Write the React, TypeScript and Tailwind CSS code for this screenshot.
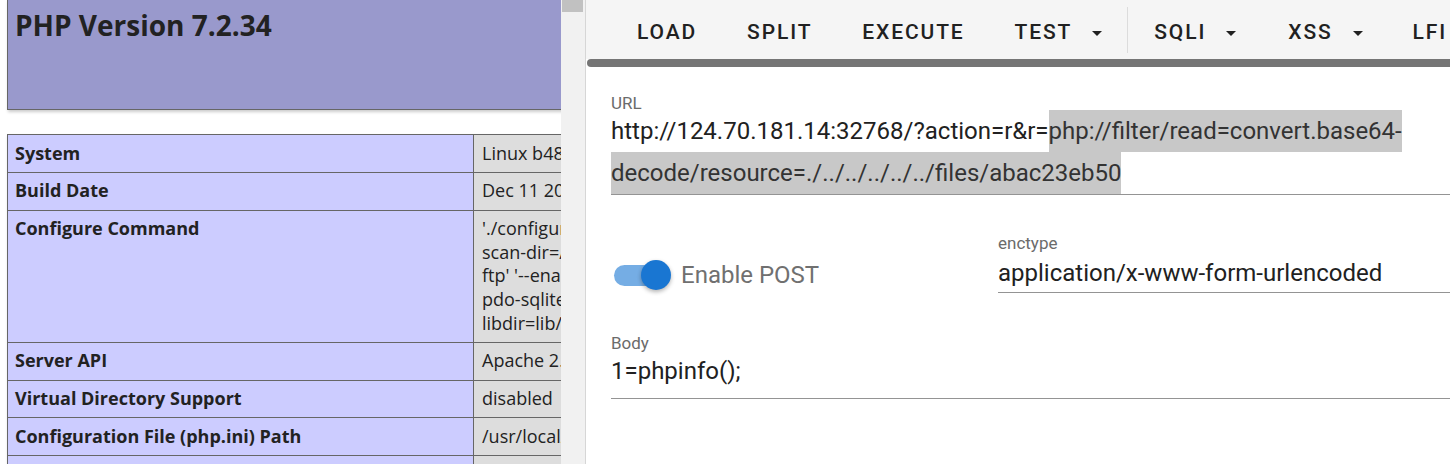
import { ReactNode } from 'react'

const rows: { label: string; value: string[] }[] = [
  { label: 'System', value: ['Linux b48d1f1a9c7e 4.15.0-112-generic #113-Ubuntu SMP Thu Jul 9 23:41:39 UTC 2020 x86_64'] },
  { label: 'Build Date', value: ['Dec 11 2020 10:44:02'] },
  {
    label: 'Configure Command',
    value: [
      "'./configure' '--build=x86_64-linux-gnu' '--with-config-file-path=/usr/local/etc/php' '--with-config-file-",
      "scan-dir=/usr/local/etc/php/conf.d' '--enable-option-checking=fatal' '--with-mhash' '--enable-",
      "ftp' '--enable-mbstring' '--enable-mysqlnd' '--with-password-argon2' '--with-sodium=shared' '--with-",
      "pdo-sqlite=/usr' '--with-sqlite3=/usr' '--with-curl' '--with-libedit' '--with-openssl' '--with-zlib' '--with-",
      "libdir=lib/x86_64-linux-gnu' '--with-apxs2' '--disable-cgi' 'build_alias=x86_64-linux-gnu'",
    ],
  },
  { label: 'Server API', value: ['Apache 2.0 Handler'] },
  { label: 'Virtual Directory Support', value: ['disabled'] },
  { label: 'Configuration File (php.ini) Path', value: ['/usr/local/etc/php'] },
  { label: 'Loaded Configuration File', value: ['(none)'] },
]

function PhpInfo() {
  return (
    <div className="w-[561px] shrink-0 overflow-hidden bg-white font-['Open_Sans',sans-serif] text-[#222]">
      <div className="w-[1100px] pl-[7px]">
        {/* header box, top edge is scrolled away */}
        <div className="h-[110px] border-x border-b border-[#666] bg-[#9999cc] pt-[4px] pl-[7px] shadow-[1px_2px_3px_#ccc]">
          <h1 className="text-[28px] font-bold leading-normal">PHP Version 7.2.34</h1>
        </div>

        <table className="mt-[24px] w-[1000px] table-fixed border-collapse text-[18px] leading-[23.6px] shadow-[1px_2px_3px_#ccc]">
          <colgroup>
            <col className="w-[466px]" />
            <col />
          </colgroup>
          <tbody>
            {rows.map((row) => (
              <tr key={row.label}>
                <td className="border border-[#666] bg-[#ccccff] py-[6.6px] pl-[7px] align-top font-bold whitespace-nowrap">
                  {row.label}
                </td>
                <td className="overflow-hidden border border-[#666] bg-[#dddddd] py-[6.6px] pl-[8px] align-top">
                  {row.value.map((line) => (
                    <div key={line} className="whitespace-nowrap">{line}</div>
                  ))}
                </td>
              </tr>
            ))}
          </tbody>
        </table>
      </div>
    </div>
  )
}

function MenuArrow() {
  return (
    <svg viewBox="0 0 24 24" className="ml-[13px] h-[24px] w-[24px] fill-current">
      <path d="M7 10l5 5 5-5z" />
    </svg>
  )
}

function ToolButton({ children, menu, pr }: { children: ReactNode; menu?: boolean; pr?: string }) {
  return (
    <div className={`flex h-full shrink-0 items-center pl-[26px] ${pr ?? (menu ? 'pr-[19px]' : 'pr-[24px]')}`}>
      <span>{children}</span>
      {menu && <MenuArrow />}
    </div>
  )
}

function HackBar() {
  return (
    <div className="flex min-w-0 flex-1 flex-col overflow-hidden bg-white font-['Roboto',sans-serif]">
      {/* toolbar */}
      <div className="flex h-[59px] shrink-0 items-center bg-[#f5f5f5] text-[21px] font-medium uppercase tracking-[0.0892857em] text-[#212121]">
        <div className="flex h-full items-center pl-[25px] pt-[6px]">
          <ToolButton>Load</ToolButton>
          <ToolButton>Split</ToolButton>
          <ToolButton>Execute</ToolButton>
          <ToolButton menu pr="pr-[18px]">Test</ToolButton>
          <div className="-mt-[6px] h-[46px] w-px shrink-0 bg-[#dcdcdc]" />
          <ToolButton menu>SQLI</ToolButton>
          <ToolButton menu pr="pr-[17px]">XSS</ToolButton>
          <ToolButton menu>LFI</ToolButton>
          <ToolButton menu>SSTI</ToolButton>
        </div>
      </div>
      <div className="ml-[1px] h-[8px] shrink-0 rounded-l-[4px] bg-[#757575]" />

      <div className="pl-[25px]">
        {/* URL */}
        <div className="h-[43px] pt-[28px] text-[17px] leading-[17px] text-[#6b6b6b]">URL</div>
        <div className="border-b border-[#949494] text-[24px] leading-[42px] text-[#212121]">
          <div className="flex h-[42px] whitespace-nowrap">
            <span>http://124.70.181.14:32768/?action=r&amp;r=</span>
            <span className="bg-[#c8c8c8] text-[#333]">php://filter/read=convert.base64-</span>
          </div>
          <div className="flex h-[42px] whitespace-nowrap">
            <span className="bg-[#c8c8c8] text-[#333]">decode/resource=./../../../../../files/abac23eb50</span>
          </div>
        </div>

        {/* POST switch + enctype */}
        <div className="flex">
          <div className="w-[387px] shrink-0 pt-[64px]">
            <div className="flex h-[32px] items-center">
              <div className="relative ml-[3px] h-[21px] w-[54px] rounded-full bg-[#75ade4]">
                <div className="absolute -top-[5px] -right-[3px] h-[30px] w-[30px] rounded-full bg-[#1976d2] shadow-[0_2px_4px_rgba(0,0,0,0.3)]" />
              </div>
              <span className="ml-[13px] text-[24px] text-[#707070]">Enable POST</span>
            </div>
          </div>
          <div className="flex-1">
            <div className="h-[57px] pt-[40px] text-[17px] leading-[17px] text-[#6b6b6b]">enctype</div>
            <div className="h-[41px] border-b border-[#949494] pt-[3px] text-[24px] leading-[37px] text-[#212121]">
              application/x-www-form-urlencoded
            </div>
          </div>
        </div>

        {/* Body */}
        <div className="mt-[42px] h-[17px] text-[17px] leading-[17px] text-[#6b6b6b]">Body</div>
        <div className="h-[47px] border-b border-[#949494] pt-[2px] pb-[10px] text-[24px] leading-[34px] text-[#212121]">
          1=phpinfo();
        </div>
      </div>
    </div>
  )
}

export default function App() {
  return (
    <div className="flex h-[464px] w-[1450px] overflow-hidden bg-white">
      <PhpInfo />
      {/* page scrollbar */}
      <div className="w-[25px] shrink-0 border-r border-[#d6d6d6] bg-[#f1f1f1]">
        <div className="ml-[1px] h-[12px] w-[21px] bg-[#c1c1c1]" />
      </div>
      <HackBar />
    </div>
  )
}
